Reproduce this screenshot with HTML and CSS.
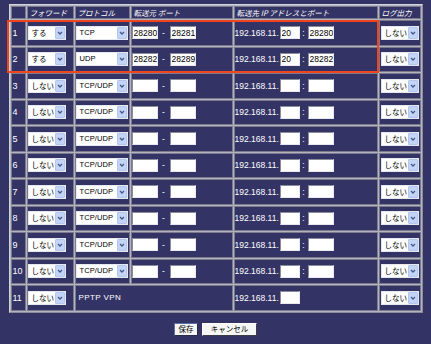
FILE: index.html
```html
<!DOCTYPE html>
<html lang="ja">
<head>
<meta charset="utf-8">
<title>ポートフォワード</title>
<link rel="stylesheet" href="styles.css">
</head>
<body>
<div class="page">
  <div class="frame">
    <table class="nat">
      <tr class="head">
        <th class="c-num"></th>
        <th class="c-fwd">フォワード</th>
        <th class="c-proto">プロトコル</th>
        <th class="c-src">転送元 ポート</th>
        <th class="c-dst">転送先 IP アドレスとポート</th>
        <th class="c-log">ログ出力</th>
      </tr>
      <tr>
        <td class="num">1</td>
        <td><span class="sel w-fwd"><span class="val">する</span><span class="arw"><svg viewBox="0 0 10 11"><path d="M2.5 4.2 L5 6.8 L7.5 4.2"/></svg></span></span></td>
        <td><span class="sel w-proto"><span class="val lat">TCP</span><span class="arw"><svg viewBox="0 0 10 11"><path d="M2.5 4.2 L5 6.8 L7.5 4.2"/></svg></span></span></td>
        <td><div class="pair"><input class="inp w-port" type="text" value="28280"><span class="dash">-</span><input class="inp w-port" type="text" value="28281"></div></td>
        <td><div class="pair"><span class="ip">192.168.11.</span><input class="inp w-oct" type="text" value="20"><span class="colon">:</span><input class="inp w-port" type="text" value="28280"></div></td>
        <td><span class="sel w-log"><span class="val">しない</span><span class="arw"><svg viewBox="0 0 10 11"><path d="M2.5 4.2 L5 6.8 L7.5 4.2"/></svg></span></span></td>
      </tr>
      <tr>
        <td class="num">2</td>
        <td><span class="sel w-fwd"><span class="val">する</span><span class="arw"><svg viewBox="0 0 10 11"><path d="M2.5 4.2 L5 6.8 L7.5 4.2"/></svg></span></span></td>
        <td><span class="sel w-proto"><span class="val lat">UDP</span><span class="arw"><svg viewBox="0 0 10 11"><path d="M2.5 4.2 L5 6.8 L7.5 4.2"/></svg></span></span></td>
        <td><div class="pair"><input class="inp w-port" type="text" value="28282"><span class="dash">-</span><input class="inp w-port" type="text" value="28289"></div></td>
        <td><div class="pair"><span class="ip">192.168.11.</span><input class="inp w-oct" type="text" value="20"><span class="colon">:</span><input class="inp w-port" type="text" value="28282"></div></td>
        <td><span class="sel w-log"><span class="val">しない</span><span class="arw"><svg viewBox="0 0 10 11"><path d="M2.5 4.2 L5 6.8 L7.5 4.2"/></svg></span></span></td>
      </tr>
      <tr>
        <td class="num">3</td>
        <td><span class="sel w-fwd"><span class="val">しない</span><span class="arw"><svg viewBox="0 0 10 11"><path d="M2.5 4.2 L5 6.8 L7.5 4.2"/></svg></span></span></td>
        <td><span class="sel w-proto"><span class="val lat">TCP/UDP</span><span class="arw"><svg viewBox="0 0 10 11"><path d="M2.5 4.2 L5 6.8 L7.5 4.2"/></svg></span></span></td>
        <td><div class="pair"><input class="inp w-port" type="text" value=""><span class="dash">-</span><input class="inp w-port" type="text" value=""></div></td>
        <td><div class="pair"><span class="ip">192.168.11.</span><input class="inp w-oct" type="text" value=""><span class="colon">:</span><input class="inp w-port" type="text" value=""></div></td>
        <td><span class="sel w-log"><span class="val">しない</span><span class="arw"><svg viewBox="0 0 10 11"><path d="M2.5 4.2 L5 6.8 L7.5 4.2"/></svg></span></span></td>
      </tr>
      <tr>
        <td class="num">4</td>
        <td><span class="sel w-fwd"><span class="val">しない</span><span class="arw"><svg viewBox="0 0 10 11"><path d="M2.5 4.2 L5 6.8 L7.5 4.2"/></svg></span></span></td>
        <td><span class="sel w-proto"><span class="val lat">TCP/UDP</span><span class="arw"><svg viewBox="0 0 10 11"><path d="M2.5 4.2 L5 6.8 L7.5 4.2"/></svg></span></span></td>
        <td><div class="pair"><input class="inp w-port" type="text" value=""><span class="dash">-</span><input class="inp w-port" type="text" value=""></div></td>
        <td><div class="pair"><span class="ip">192.168.11.</span><input class="inp w-oct" type="text" value=""><span class="colon">:</span><input class="inp w-port" type="text" value=""></div></td>
        <td><span class="sel w-log"><span class="val">しない</span><span class="arw"><svg viewBox="0 0 10 11"><path d="M2.5 4.2 L5 6.8 L7.5 4.2"/></svg></span></span></td>
      </tr>
      <tr>
        <td class="num">5</td>
        <td><span class="sel w-fwd"><span class="val">しない</span><span class="arw"><svg viewBox="0 0 10 11"><path d="M2.5 4.2 L5 6.8 L7.5 4.2"/></svg></span></span></td>
        <td><span class="sel w-proto"><span class="val lat">TCP/UDP</span><span class="arw"><svg viewBox="0 0 10 11"><path d="M2.5 4.2 L5 6.8 L7.5 4.2"/></svg></span></span></td>
        <td><div class="pair"><input class="inp w-port" type="text" value=""><span class="dash">-</span><input class="inp w-port" type="text" value=""></div></td>
        <td><div class="pair"><span class="ip">192.168.11.</span><input class="inp w-oct" type="text" value=""><span class="colon">:</span><input class="inp w-port" type="text" value=""></div></td>
        <td><span class="sel w-log"><span class="val">しない</span><span class="arw"><svg viewBox="0 0 10 11"><path d="M2.5 4.2 L5 6.8 L7.5 4.2"/></svg></span></span></td>
      </tr>
      <tr>
        <td class="num">6</td>
        <td><span class="sel w-fwd"><span class="val">しない</span><span class="arw"><svg viewBox="0 0 10 11"><path d="M2.5 4.2 L5 6.8 L7.5 4.2"/></svg></span></span></td>
        <td><span class="sel w-proto"><span class="val lat">TCP/UDP</span><span class="arw"><svg viewBox="0 0 10 11"><path d="M2.5 4.2 L5 6.8 L7.5 4.2"/></svg></span></span></td>
        <td><div class="pair"><input class="inp w-port" type="text" value=""><span class="dash">-</span><input class="inp w-port" type="text" value=""></div></td>
        <td><div class="pair"><span class="ip">192.168.11.</span><input class="inp w-oct" type="text" value=""><span class="colon">:</span><input class="inp w-port" type="text" value=""></div></td>
        <td><span class="sel w-log"><span class="val">しない</span><span class="arw"><svg viewBox="0 0 10 11"><path d="M2.5 4.2 L5 6.8 L7.5 4.2"/></svg></span></span></td>
      </tr>
      <tr>
        <td class="num">7</td>
        <td><span class="sel w-fwd"><span class="val">しない</span><span class="arw"><svg viewBox="0 0 10 11"><path d="M2.5 4.2 L5 6.8 L7.5 4.2"/></svg></span></span></td>
        <td><span class="sel w-proto"><span class="val lat">TCP/UDP</span><span class="arw"><svg viewBox="0 0 10 11"><path d="M2.5 4.2 L5 6.8 L7.5 4.2"/></svg></span></span></td>
        <td><div class="pair"><input class="inp w-port" type="text" value=""><span class="dash">-</span><input class="inp w-port" type="text" value=""></div></td>
        <td><div class="pair"><span class="ip">192.168.11.</span><input class="inp w-oct" type="text" value=""><span class="colon">:</span><input class="inp w-port" type="text" value=""></div></td>
        <td><span class="sel w-log"><span class="val">しない</span><span class="arw"><svg viewBox="0 0 10 11"><path d="M2.5 4.2 L5 6.8 L7.5 4.2"/></svg></span></span></td>
      </tr>
      <tr>
        <td class="num">8</td>
        <td><span class="sel w-fwd"><span class="val">しない</span><span class="arw"><svg viewBox="0 0 10 11"><path d="M2.5 4.2 L5 6.8 L7.5 4.2"/></svg></span></span></td>
        <td><span class="sel w-proto"><span class="val lat">TCP/UDP</span><span class="arw"><svg viewBox="0 0 10 11"><path d="M2.5 4.2 L5 6.8 L7.5 4.2"/></svg></span></span></td>
        <td><div class="pair"><input class="inp w-port" type="text" value=""><span class="dash">-</span><input class="inp w-port" type="text" value=""></div></td>
        <td><div class="pair"><span class="ip">192.168.11.</span><input class="inp w-oct" type="text" value=""><span class="colon">:</span><input class="inp w-port" type="text" value=""></div></td>
        <td><span class="sel w-log"><span class="val">しない</span><span class="arw"><svg viewBox="0 0 10 11"><path d="M2.5 4.2 L5 6.8 L7.5 4.2"/></svg></span></span></td>
      </tr>
      <tr>
        <td class="num">9</td>
        <td><span class="sel w-fwd"><span class="val">しない</span><span class="arw"><svg viewBox="0 0 10 11"><path d="M2.5 4.2 L5 6.8 L7.5 4.2"/></svg></span></span></td>
        <td><span class="sel w-proto"><span class="val lat">TCP/UDP</span><span class="arw"><svg viewBox="0 0 10 11"><path d="M2.5 4.2 L5 6.8 L7.5 4.2"/></svg></span></span></td>
        <td><div class="pair"><input class="inp w-port" type="text" value=""><span class="dash">-</span><input class="inp w-port" type="text" value=""></div></td>
        <td><div class="pair"><span class="ip">192.168.11.</span><input class="inp w-oct" type="text" value=""><span class="colon">:</span><input class="inp w-port" type="text" value=""></div></td>
        <td><span class="sel w-log"><span class="val">しない</span><span class="arw"><svg viewBox="0 0 10 11"><path d="M2.5 4.2 L5 6.8 L7.5 4.2"/></svg></span></span></td>
      </tr>
      <tr>
        <td class="num">10</td>
        <td><span class="sel w-fwd"><span class="val">しない</span><span class="arw"><svg viewBox="0 0 10 11"><path d="M2.5 4.2 L5 6.8 L7.5 4.2"/></svg></span></span></td>
        <td><span class="sel w-proto"><span class="val lat">TCP/UDP</span><span class="arw"><svg viewBox="0 0 10 11"><path d="M2.5 4.2 L5 6.8 L7.5 4.2"/></svg></span></span></td>
        <td><div class="pair"><input class="inp w-port" type="text" value=""><span class="dash">-</span><input class="inp w-port" type="text" value=""></div></td>
        <td><div class="pair"><span class="ip">192.168.11.</span><input class="inp w-oct" type="text" value=""><span class="colon">:</span><input class="inp w-port" type="text" value=""></div></td>
        <td><span class="sel w-log"><span class="val">しない</span><span class="arw"><svg viewBox="0 0 10 11"><path d="M2.5 4.2 L5 6.8 L7.5 4.2"/></svg></span></span></td>
      </tr>
      <tr>
        <td class="num">11</td>
        <td><span class="sel w-fwd"><span class="val">しない</span><span class="arw"><svg viewBox="0 0 10 11"><path d="M2.5 4.2 L5 6.8 L7.5 4.2"/></svg></span></span></td>
        <td colspan="2" class="vpn">PPTP VPN</td>
        <td><div class="pair"><span class="ip">192.168.11.</span><input class="inp w-oct" type="text" value=""></div></td>
        <td><span class="sel w-log"><span class="val">しない</span><span class="arw"><svg viewBox="0 0 10 11"><path d="M2.5 4.2 L5 6.8 L7.5 4.2"/></svg></span></span></td>
      </tr>
    </table>
    <div class="highlight"></div>
  </div>
  <div class="actions">
    <button class="btn btn-save" type="button">保存</button>
    <button class="btn btn-cancel" type="button">キャンセル</button>
  </div>
</div>
</body>
</html>
```

FILE: styles.css
```css
* {
  box-sizing: border-box;
}

html,
body {
  margin: 0;
  padding: 0;
}

body {
  width: 431px;
  height: 344px;
  overflow: hidden;
  background: #333366;
  color: #ffffff;
  font-family: "Liberation Sans", "Noto Sans CJK JP", sans-serif;
  font-size: 8.5px;
}

.page {
  padding-top: 4px;
  display: flex;
  flex-direction: column;
  align-items: center;
}

.frame {
  position: relative;
}

.nat {
  table-layout: fixed;
  width: 414px;
  border-collapse: separate;
  border-spacing: 1px;
  border: 1px solid;
  border-color: #d4d4dc #8a8a98 #8a8a98 #d4d4dc;
  background: #b4b4c0;
}

.nat th,
.nat td {
  padding: 0;
  background: #333366;
  border: 1px solid #7a7a8c;
  text-align: left;
  vertical-align: middle;
  white-space: nowrap;
  overflow: hidden;
}

.nat th {
  height: 13px;
  padding-left: 2px;
  font-family: "Noto Sans CJK JP", sans-serif;
  font-size: 7.5px;
  font-style: italic;
  font-weight: normal;
  line-height: 10px;
}

.nat td {
  height: 25.5px;
}

.c-num { width: 15px; }
.c-fwd { width: 47px; }
.c-proto { width: 55px; }
.c-src { width: 102px; }
.c-dst { width: 144px; }
.c-log { width: 42px; }

.num {
  padding-left: 1px !important;
  font-size: 9px;
}

.vpn {
  padding-left: 3px !important;
  font-size: 8px;
  letter-spacing: 0.4px;
}

/* dropdowns */
.sel {
  display: inline-flex;
  align-items: stretch;
  height: 14px;
  vertical-align: middle;
  background: #ffffff;
  border: 1px solid #e4e8f0;
}

.w-fwd { width: 38px; }
.w-proto { width: 52px; }
.w-log { width: 38px; margin-left: 1px; }

.val {
  flex: 1;
  min-width: 0;
  padding-left: 3px;
  color: #000000;
  font-family: "Noto Sans CJK JP", sans-serif;
  font-size: 7.5px;
  line-height: 12px;
  overflow: hidden;
}

.val.lat {
  font-family: "Liberation Sans", sans-serif;
  font-size: 7.5px;
  letter-spacing: 0.1px;
  padding-left: 3px;
}

.arw {
  flex: none;
  width: 10px;
  background: #c4d4f6;
  border: 1px solid #b4c6ee;
  border-radius: 1px;
  display: flex;
}

.arw svg {
  width: 8px;
  height: 10px;
  fill: none;
  stroke: #3f5888;
  stroke-width: 1.5;
}

/* text inputs */
.pair {
  display: flex;
  align-items: center;
}

.inp {
  height: 13px;
  margin: 0;
  padding: 0 0 0 1px;
  background: #ffffff;
  color: #000000;
  border: 1px solid;
  border-color: #8c8c98 #e8e8ee #e8e8ee #8c8c98;
  font-family: "Liberation Sans", sans-serif;
  font-size: 8.5px;
  line-height: 11px;
  outline: none;
}

.w-port { width: 26px; }
.w-oct { width: 20px; }

.dash {
  width: 12px;
  text-align: center;
  font-size: 8.5px;
}

.ip {
  width: 45px;
  font-size: 8.5px;
}

.colon {
  width: 8px;
  text-align: center;
  font-size: 8.5px;
}

/* annotation highlight over rows 1-2 */
.highlight {
  position: absolute;
  left: -2px;
  top: 16px;
  width: 372px;
  height: 53px;
  border: 2px solid #f0441e;
  pointer-events: none;
}

/* buttons */
.actions {
  display: flex;
  gap: 4px;
  margin-top: 10px;
}

.btn {
  height: 13px;
  padding: 0;
  margin: 0;
  background: #f6f6f6;
  color: #000000;
  border: 1px solid;
  border-color: #ffffff #3c3c48 #3c3c48 #ffffff;
  font-family: "Noto Sans CJK JP", sans-serif;
  font-size: 7.5px;
  line-height: 10px;
}

.btn-save {
  width: 24px;
  border-color: #5a6ea8 #2a2a48 #2a2a48 #5a6ea8;
}

.btn-cancel {
  width: 55px;
}
```
